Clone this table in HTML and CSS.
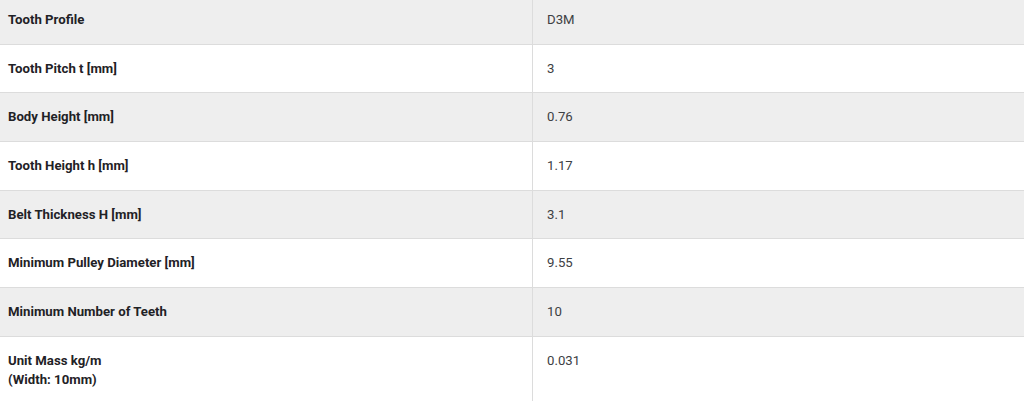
FILE: index.html
```html
<!DOCTYPE html>
<html>
<head>
<meta charset="utf-8">
<link rel="stylesheet" href="styles.css">
</head>
<body>
<table class="specs">
  <tbody>
    <tr class="alt"><th>Tooth Profile</th><td>D3M</td></tr>
    <tr><th>Tooth Pitch t [mm]</th><td>3</td></tr>
    <tr class="alt"><th>Body Height [mm]</th><td>0.76</td></tr>
    <tr><th>Tooth Height h [mm]</th><td>1.17</td></tr>
    <tr class="alt"><th>Belt Thickness H [mm]</th><td>3.1</td></tr>
    <tr><th>Minimum Pulley Diameter [mm]</th><td>9.55</td></tr>
    <tr class="alt"><th>Minimum Number of Teeth</th><td>10</td></tr>
    <tr><th>Unit Mass kg/m<br>(Width: 10mm)</th><td>0.031</td></tr>
  </tbody>
</table>
</body>
</html>
```
FILE: styles.css
```css
html, body {
  margin: 0;
  padding: 0;
  background: #ffffff;
}
body {
  font-family: Roboto, "Liberation Sans", Arial, sans-serif;
  font-size: 13.2px;
  overflow: hidden;
}
.specs {
  width: 100%;
  border-collapse: collapse;
  margin-top: -4px;
}
.specs th,
.specs td {
  text-align: left;
  vertical-align: top;
  padding: 14px 14px 14px 14px;
  line-height: 19.67px;
  border-bottom: 1px solid #dcdcdc;
}
.specs th {
  width: 510px;
  padding-left: 8px;
  font-weight: 700;
  color: #1f2226;
  border-right: 1px solid #dcdcdc;
}
.specs td {
  color: #3d4043;
  font-weight: 400;
}
.specs tr.alt th,
.specs tr.alt td {
  background: #eeeeee;
}
```
